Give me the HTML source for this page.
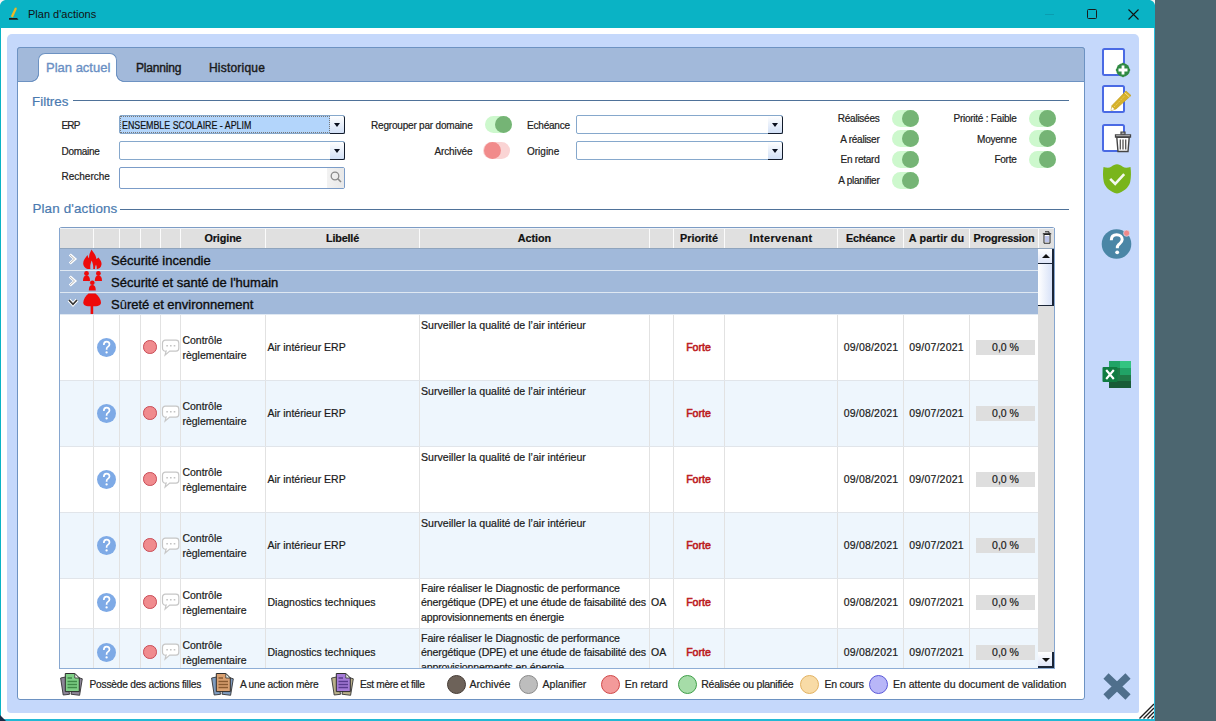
<!DOCTYPE html><html><head><meta charset="utf-8"><style>
*{margin:0;padding:0;box-sizing:border-box}
html,body{width:1216px;height:721px;overflow:hidden;background:#4c6670;font-family:"Liberation Sans",sans-serif;color:#1a1a1a}
.a{position:absolute}
.t{position:absolute;white-space:nowrap;line-height:1;-webkit-text-stroke:0.2px currentColor}
svg{position:absolute;overflow:visible}
</style></head><body>
<div class="a" style="left:0px;top:0px;width:1155px;height:721px;background:#0ab3c5"></div>
<svg style="left:0;top:0" width="6" height="6" viewBox="0 0 6 6"><path d="M0 0 H5 Q1 1 0 5 Z" fill="#f4f4f4"/></svg>
<svg style="left:1149px;top:0" width="6" height="6" viewBox="0 0 6 6"><path d="M6 0 H1 Q5 1 6 5 Z" fill="#f4f4f4"/></svg>
<div class="a" style="left:1px;top:28px;width:1153px;height:691px;background:#fff"></div>
<div class="a" style="left:7px;top:34px;width:1132px;height:679px;background:#c5d8fb;border-radius:5px 5px 2px 4px"></div>
<svg style="left:8px;top:6px" width="14" height="16" viewBox="0 0 14 16"><path d="M2.8 10.6 L7 1.6 L9 2.6 L4.9 11.4 Z" fill="#f0b825"/><path d="M7 1.6 L9 2.6 L8.6 1.2 Z" fill="#7ac23a"/><path d="M1 12 h8 l1.5 1.8 h-9.5z" fill="#1d1d1d"/></svg>
<div class="t" style="left:28.00px;top:8.89px;font-size:11px;color:#111;-webkit-text-stroke:0">Plan d'actions</div>
<div class="a" style="left:1045px;top:14px;width:9px;height:1px;background:#0a9db0"></div>
<div class="a" style="left:1087px;top:9px;width:10px;height:10px;border:1.2px solid #1a1a1a;border-radius:1.5px"></div>
<svg style="left:1128px;top:9px" width="11" height="11" viewBox="0 0 11 11"><path d="M0.5 0.5 L10.5 10.5 M10.5 0.5 L0.5 10.5" stroke="#111" stroke-width="1.1"/></svg>
<div class="a" style="left:17px;top:47px;width:1068px;height:653px;background:#fff;border:1px solid #6d92c2;border-radius:3px"></div>
<div class="a" style="left:17px;top:47px;width:1068px;height:35px;background:#a2b9da;border:1px solid #6d92c2;border-radius:3px 3px 0 0"></div>
<div class="a" style="left:38px;top:53px;width:79px;height:30px;background:#fff;border:1px solid #6d92c2;border-bottom:none;border-radius:7px 7px 0 0"></div>
<div class="a" style="left:31px;top:74px;width:8px;height:8px;background:radial-gradient(circle at 0 0,#a2b9da 0,#a2b9da 6.5px,#6d92c2 7px,#6d92c2 7.6px,#fff 8.2px)"></div>
<div class="a" style="left:116px;top:74px;width:8px;height:8px;background:radial-gradient(circle at 100% 0,#a2b9da 0,#a2b9da 6.5px,#6d92c2 7px,#6d92c2 7.6px,#fff 8.2px)"></div>
<div class="a" style="left:38px;top:81px;width:79px;height:2px;background:#fff"></div>
<div class="t" style="left:46.00px;top:60.50px;font-size:13px;color:#6a8fc4;-webkit-text-stroke:0.35px #6a8fc4">Plan actuel</div>
<div class="t" style="left:136.00px;top:61.74px;font-size:12px;color:#1a1a1a;-webkit-text-stroke:0.4px #1a1a1a;letter-spacing:-0.2px">Planning</div>
<div class="t" style="left:209.00px;top:61.74px;font-size:12px;color:#1a1a1a;-webkit-text-stroke:0.4px #1a1a1a;letter-spacing:0.2px">Historique</div>
<div class="t" style="left:32.00px;top:95.06px;font-size:13.4px;color:#4a7ab0;-webkit-text-stroke:0.2px #4a7ab0">Filtres</div>
<div class="a" style="left:73px;top:100px;width:996px;height:1px;background:#4f7299"></div>
<div class="t" style="left:61.50px;top:120.84px;font-size:10px;color:#222;letter-spacing:-0.8px">ERP</div>
<div class="t" style="left:61.50px;top:146.84px;font-size:10px;color:#222;letter-spacing:-0.3px">Domaine</div>
<div class="t" style="left:61.50px;top:172.13px;font-size:10px;color:#222;">Recherche</div>
<div class="a" style="left:119px;top:115px;width:226px;height:19px;background:#fff;border:1px solid #86a8cc;border-radius:2px"></div>
<div class="a" style="left:120px;top:116px;width:210px;height:17px;background:#b3d5fb;border:1px dotted #777"></div>
<div class="a" style="left:330px;top:116px;width:15px;height:18px;background:linear-gradient(#ffffff,#d2e0f6);border-right:1.5px solid #111a2a;border-bottom:1.5px solid #111a2a;border-radius:0 2px 2px 0"></div>
<div class="a" style="left:334px;top:123px;width:0;height:0;border-left:3.5px solid transparent;border-right:3.5px solid transparent;border-top:4.5px solid #0a0f1e"></div>
<div class="t" style="left:121.50px;top:120.73px;font-size:10px;color:#111;transform:scaleX(0.885);transform-origin:0 0">ENSEMBLE SCOLAIRE - APLIM</div>
<div class="a" style="left:119px;top:141px;width:226px;height:19px;background:#fff;border:1px solid #86a8cc;border-radius:2px"></div>
<div class="a" style="left:330px;top:142px;width:15px;height:18px;background:linear-gradient(#ffffff,#d2e0f6);border-right:1.5px solid #111a2a;border-bottom:1.5px solid #111a2a;border-radius:0 2px 2px 0"></div>
<div class="a" style="left:334px;top:149px;width:0;height:0;border-left:3.5px solid transparent;border-right:3.5px solid transparent;border-top:4.5px solid #0a0f1e"></div>
<div class="a" style="left:119px;top:167px;width:226px;height:22px;background:#fff;border:1px solid #7b9cc8;border-radius:2px"></div>
<div class="a" style="left:327px;top:168px;width:17px;height:20px;background:linear-gradient(90deg,#f2f2f2,#e8e8e8)"></div>
<svg style="left:330px;top:171px" width="12" height="12" viewBox="0 0 12 12"><circle cx="5" cy="5" r="3.8" fill="none" stroke="#8a8a8a" stroke-width="1.3"/><path d="M7.8 7.8 L11 11" stroke="#8a8a8a" stroke-width="1.6"/></svg>
<div class="t" style="left:172.50px;width:300px;text-align:right;top:120.94px;font-size:10px;color:#222;letter-spacing:-0.2px">Regrouper par domaine</div>
<div class="a" style="left:485px;top:116px;width:27px;height:17px;border-radius:9px;background:#cdf8cd"></div>
<div class="a" style="left:495px;top:116px;width:17px;height:17px;border-radius:50%;background:#75b475"></div>
<div class="t" style="left:172.50px;width:300px;text-align:right;top:146.73px;font-size:10px;color:#222;letter-spacing:-0.1px">Archivée</div>
<div class="a" style="left:483px;top:142px;width:27px;height:17px;border-radius:9px;background:#fad4d4"></div>
<div class="a" style="left:484px;top:142px;width:17px;height:17px;border-radius:50%;background:#f18b8b"></div>
<div class="t" style="left:527.00px;top:120.94px;font-size:10px;color:#222;letter-spacing:-0.2px">Echéance</div>
<div class="t" style="left:527.00px;top:146.73px;font-size:10px;color:#222;">Origine</div>
<div class="a" style="left:576px;top:115px;width:207px;height:19px;background:#fff;border:1px solid #86a8cc;border-radius:2px"></div>
<div class="a" style="left:768px;top:116px;width:15px;height:18px;background:linear-gradient(#ffffff,#d2e0f6);border-right:1.5px solid #111a2a;border-bottom:1.5px solid #111a2a;border-radius:0 2px 2px 0"></div>
<div class="a" style="left:772px;top:123px;width:0;height:0;border-left:3.5px solid transparent;border-right:3.5px solid transparent;border-top:4.5px solid #0a0f1e"></div>
<div class="a" style="left:576px;top:141px;width:207px;height:19px;background:#fff;border:1px solid #86a8cc;border-radius:2px"></div>
<div class="a" style="left:768px;top:142px;width:15px;height:18px;background:linear-gradient(#ffffff,#d2e0f6);border-right:1.5px solid #111a2a;border-bottom:1.5px solid #111a2a;border-radius:0 2px 2px 0"></div>
<div class="a" style="left:772px;top:149px;width:0;height:0;border-left:3.5px solid transparent;border-right:3.5px solid transparent;border-top:4.5px solid #0a0f1e"></div>
<div class="t" style="left:579.50px;width:300px;text-align:right;top:114.03px;font-size:10px;color:#222;letter-spacing:-0.25px">Réalisées</div>
<div class="a" style="left:892px;top:110px;width:27px;height:17px;border-radius:9px;background:#cdf8cd"></div>
<div class="a" style="left:902px;top:110px;width:17px;height:17px;border-radius:50%;background:#75b475"></div>
<div class="t" style="left:579.50px;width:300px;text-align:right;top:134.53px;font-size:10px;color:#222;letter-spacing:-0.25px">A réaliser</div>
<div class="a" style="left:892px;top:130px;width:27px;height:17px;border-radius:9px;background:#cdf8cd"></div>
<div class="a" style="left:902px;top:130px;width:17px;height:17px;border-radius:50%;background:#75b475"></div>
<div class="t" style="left:579.50px;width:300px;text-align:right;top:155.44px;font-size:10px;color:#222;letter-spacing:-0.25px">En retard</div>
<div class="a" style="left:892px;top:151px;width:27px;height:17px;border-radius:9px;background:#cdf8cd"></div>
<div class="a" style="left:902px;top:151px;width:17px;height:17px;border-radius:50%;background:#75b475"></div>
<div class="t" style="left:579.50px;width:300px;text-align:right;top:176.44px;font-size:10px;color:#222;letter-spacing:-0.25px">A planifier</div>
<div class="a" style="left:892px;top:172px;width:27px;height:17px;border-radius:9px;background:#cdf8cd"></div>
<div class="a" style="left:902px;top:172px;width:17px;height:17px;border-radius:50%;background:#75b475"></div>
<div class="t" style="left:716.50px;width:300px;text-align:right;top:114.03px;font-size:10px;color:#222;letter-spacing:-0.25px">Priorité : Faible</div>
<div class="a" style="left:1029px;top:110px;width:27px;height:17px;border-radius:9px;background:#cdf8cd"></div>
<div class="a" style="left:1039px;top:110px;width:17px;height:17px;border-radius:50%;background:#75b475"></div>
<div class="t" style="left:716.50px;width:300px;text-align:right;top:134.53px;font-size:10px;color:#222;letter-spacing:-0.25px">Moyenne</div>
<div class="a" style="left:1029px;top:130px;width:27px;height:17px;border-radius:9px;background:#cdf8cd"></div>
<div class="a" style="left:1039px;top:130px;width:17px;height:17px;border-radius:50%;background:#75b475"></div>
<div class="t" style="left:716.50px;width:300px;text-align:right;top:155.44px;font-size:10px;color:#222;letter-spacing:-0.25px">Forte</div>
<div class="a" style="left:1029px;top:151px;width:27px;height:17px;border-radius:9px;background:#cdf8cd"></div>
<div class="a" style="left:1039px;top:151px;width:17px;height:17px;border-radius:50%;background:#75b475"></div>
<div class="t" style="left:32.40px;top:202.46px;font-size:13.4px;color:#4a7ab0;letter-spacing:0.15px;-webkit-text-stroke:0.2px #4a7ab0">Plan d'actions</div>
<div class="a" style="left:120px;top:209px;width:949px;height:1px;background:#4f7299"></div>
<div class="a" style="left:59px;top:227px;width:996px;height:442px;background:#fff;border:1px solid #86a6cf;border-top:2px solid #7d9cc4;border-radius:3px 3px 0 0;overflow:hidden"></div>
<div class="a" style="left:60px;top:229px;width:978px;height:19px;background:#e0e0e0"></div>
<div class="a" style="left:60px;top:228px;width:994px;height:1px;background:#f0f3f7"></div>
<div class="a" style="left:1038px;top:229px;width:16px;height:20px;background:#e0e0e0"></div>
<div class="a" style="left:60px;top:248px;width:994px;height:1px;background:#8fa4bd"></div>
<div class="a" style="left:93px;top:229px;width:1px;height:19px;background:#fbfbfb"></div>
<div class="a" style="left:119px;top:229px;width:1px;height:19px;background:#fbfbfb"></div>
<div class="a" style="left:140px;top:229px;width:1px;height:19px;background:#fbfbfb"></div>
<div class="a" style="left:160px;top:229px;width:1px;height:19px;background:#fbfbfb"></div>
<div class="a" style="left:180px;top:229px;width:1px;height:19px;background:#fbfbfb"></div>
<div class="a" style="left:265px;top:229px;width:1px;height:19px;background:#fbfbfb"></div>
<div class="a" style="left:419px;top:229px;width:1px;height:19px;background:#fbfbfb"></div>
<div class="a" style="left:649px;top:229px;width:1px;height:19px;background:#fbfbfb"></div>
<div class="a" style="left:673px;top:229px;width:1px;height:19px;background:#fbfbfb"></div>
<div class="a" style="left:724px;top:229px;width:1px;height:19px;background:#fbfbfb"></div>
<div class="a" style="left:837px;top:229px;width:1px;height:19px;background:#fbfbfb"></div>
<div class="a" style="left:903px;top:229px;width:1px;height:19px;background:#fbfbfb"></div>
<div class="a" style="left:969px;top:229px;width:1px;height:19px;background:#fbfbfb"></div>
<div class="a" style="left:1038px;top:229px;width:1px;height:19px;background:#fbfbfb"></div>
<div class="t" style="left:73.00px;width:300px;text-align:center;top:233.16px;font-size:10.8px;font-weight:bold;color:#111;letter-spacing:-0.11px">Origine</div>
<div class="t" style="left:192.50px;width:300px;text-align:center;top:233.16px;font-size:10.8px;font-weight:bold;color:#111;letter-spacing:-0.17px">Libellé</div>
<div class="t" style="left:384.50px;width:300px;text-align:center;top:233.16px;font-size:10.8px;font-weight:bold;color:#111;letter-spacing:-0.05px">Action</div>
<div class="t" style="left:549.00px;width:300px;text-align:center;top:233.16px;font-size:10.8px;font-weight:bold;color:#111;letter-spacing:0px">Priorité</div>
<div class="t" style="left:631.00px;width:300px;text-align:center;top:233.16px;font-size:10.8px;font-weight:bold;color:#111;letter-spacing:0.44px">Intervenant</div>
<div class="t" style="left:720.50px;width:300px;text-align:center;top:233.16px;font-size:10.8px;font-weight:bold;color:#111;letter-spacing:-0.18px">Echéance</div>
<div class="t" style="left:786.50px;width:300px;text-align:center;top:233.16px;font-size:10.8px;font-weight:bold;color:#111;letter-spacing:0.1px">A partir du</div>
<div class="t" style="left:854.00px;width:300px;text-align:center;top:233.16px;font-size:10.8px;font-weight:bold;color:#111;letter-spacing:-0.2px">Progression</div>
<svg style="left:1042px;top:231px" width="10" height="13" viewBox="0 0 10 13"><path d="M3 0.8 h4 v1.7" fill="none" stroke="#222" stroke-width="1"/><path d="M0.8 2.8 h8.4" stroke="#222" stroke-width="1.2"/><path d="M2 3.5 h6 v8.7 h-6z" fill="#fff" stroke="#222" stroke-width="1"/><path d="M4 5v6M6 5v6" stroke="#7a8ad8" stroke-width="1"/></svg>
<div class="a" style="left:60px;top:249px;width:978px;height:21px;background:#a1b9da"></div>
<div class="a" style="left:60px;top:270px;width:978px;height:1px;background:#dfe8f2"></div>
<div class="t" style="left:111.00px;top:253.50px;font-size:13px;color:#0d0d0d;-webkit-text-stroke:0.35px #0d0d0d">Sécurité incendie</div>
<svg style="left:68px;top:253px" width="10" height="12" viewBox="0 0 10 12"><path d="M1.8 1.5 L6.8 6 L1.8 10.5" fill="none" stroke="#fff" stroke-width="3"/><path d="M2 2 L6.5 6 L2 10" fill="none" stroke="#b0b0b0" stroke-width="0.9"/></svg>
<div class="a" style="left:60px;top:271px;width:978px;height:21px;background:#a1b9da"></div>
<div class="a" style="left:60px;top:292px;width:978px;height:1px;background:#dfe8f2"></div>
<div class="t" style="left:111.00px;top:275.50px;font-size:13px;color:#0d0d0d;-webkit-text-stroke:0.35px #0d0d0d">Sécurité et santé de l'humain</div>
<svg style="left:68px;top:275px" width="10" height="12" viewBox="0 0 10 12"><path d="M1.8 1.5 L6.8 6 L1.8 10.5" fill="none" stroke="#fff" stroke-width="3"/><path d="M2 2 L6.5 6 L2 10" fill="none" stroke="#b0b0b0" stroke-width="0.9"/></svg>
<div class="a" style="left:60px;top:293px;width:978px;height:21px;background:#a1b9da"></div>
<div class="a" style="left:60px;top:314px;width:978px;height:1px;background:#dfe8f2"></div>
<div class="t" style="left:111.00px;top:297.50px;font-size:13px;color:#0d0d0d;-webkit-text-stroke:0.35px #0d0d0d">S<span style="-webkit-text-stroke:0.1px #0d0d0d">û</span>reté et environnement</div>
<svg style="left:67px;top:298px" width="12" height="10" viewBox="0 0 12 10"><path d="M2 2 L6 6.3 L10 2" fill="none" stroke="#fff" stroke-width="3.6"/><path d="M2 2 L6 6.3 L10 2" fill="none" stroke="#333" stroke-width="1.7"/></svg>
<svg style="left:83px;top:249px" width="19" height="21" viewBox="0 0 19 21"><path fill="#ee0a0a" fill-rule="evenodd" d="M8.5 0.5 C10 3 12.8 5.5 13.4 10 C14.3 9.6 15 9.2 15.5 8.5 C17.5 11 18.8 13 18.5 15.5 C18.2 18.5 16 20 13 20 L6 20 C3 20 0.4 18 0.2 14.5 C0 11.5 2.5 9 4.5 6 C4.8 7.5 5.4 8.6 6 9.2 C6 5 7.5 3 8.5 0.5 Z M8.7 11.5 C9.6 14 10.6 16.5 10.2 20 L7.4 20 C7 17 7.6 14 8.7 11.5 Z M13 15.5 C13.6 17 14 18.5 13.7 20 L12 20 C11.9 18.5 12.3 17 13 15.5Z"/></svg>
<svg style="left:82px;top:270px" width="22" height="22" viewBox="0 0 22 22"><path d="M4.5 8 L10.3 17 L16.5 8" stroke="#9aa6b6" stroke-width="0.6" fill="none"/><g fill="#ee0a0a"><circle cx="4.5" cy="3.5" r="2.4"/><path d="M1 11 C1 7.3 2.3 5.6 4.5 5.6 C6.7 5.6 8 7.3 8 11Z"/><circle cx="16.4" cy="3.5" r="2.4"/><path d="M12.8 11 C12.8 7.3 14.1 5.6 16.4 5.6 C18.7 5.6 20 7.3 20 11Z"/><circle cx="10.3" cy="12.8" r="2.3"/><path d="M6.8 20.5 C6.8 16.8 8.1 15 10.3 15 C12.5 15 13.8 16.8 13.8 20.5Z"/></g></svg>
<svg style="left:83px;top:293px" width="19" height="22" viewBox="0 0 19 22"><path d="M5.5 0.5 L12.5 0.5 C15.5 3 18 6.5 18 9.5 C18 12.5 15.5 13.3 9 13.3 C2.5 13.3 0.3 12.5 0.3 9.5 C0.3 6.5 2.5 3 5.5 0.5Z" fill="#ee0a0a"/><path d="M7.6 12.5 h2.6 v8.5 h-2.6z" fill="#ee0a0a"/></svg>
<div class="a" style="left:0;top:0;width:1216px;height:668px;overflow:hidden">
<div class="a" style="left:60px;top:315px;width:978px;height:65px;background:#ffffff"></div>
<div class="a" style="left:60px;top:380px;width:978px;height:1px;background:#e1e5ea"></div>
<div class="a" style="left:93px;top:315px;width:1px;height:65px;background:#e2e2e2"></div>
<div class="a" style="left:119px;top:315px;width:1px;height:65px;background:#e2e2e2"></div>
<div class="a" style="left:140px;top:315px;width:1px;height:65px;background:#e2e2e2"></div>
<div class="a" style="left:160px;top:315px;width:1px;height:65px;background:#e2e2e2"></div>
<div class="a" style="left:180px;top:315px;width:1px;height:65px;background:#e2e2e2"></div>
<div class="a" style="left:265px;top:315px;width:1px;height:65px;background:#e2e2e2"></div>
<div class="a" style="left:419px;top:315px;width:1px;height:65px;background:#e2e2e2"></div>
<div class="a" style="left:649px;top:315px;width:1px;height:65px;background:#e2e2e2"></div>
<div class="a" style="left:673px;top:315px;width:1px;height:65px;background:#e2e2e2"></div>
<div class="a" style="left:724px;top:315px;width:1px;height:65px;background:#e2e2e2"></div>
<div class="a" style="left:837px;top:315px;width:1px;height:65px;background:#e2e2e2"></div>
<div class="a" style="left:903px;top:315px;width:1px;height:65px;background:#e2e2e2"></div>
<div class="a" style="left:969px;top:315px;width:1px;height:65px;background:#e2e2e2"></div>
<svg style="left:97px;top:338.0px" width="19" height="19" viewBox="0 0 19 19"><circle cx="9.5" cy="9.5" r="9.5" fill="#7eaae6"/><path d="M6.8 7 C6.8 5 8 3.6 9.6 3.6 C11.3 3.6 12.5 4.9 12.5 6.5 C12.5 8.1 10.9 8.7 10.1 9.5 C9.6 10 9.6 10.7 9.6 11.8" fill="none" stroke="#fff" stroke-width="1.7"/><circle cx="9.6" cy="14.4" r="1.15" fill="#fff"/></svg>
<div class="a" style="left:143px;top:340.3px;width:13.5px;height:13.5px;border-radius:50%;background:#f08b8e;border:1.2px solid #c94a55"></div>
<svg style="left:161px;top:338.5px" width="19" height="18" viewBox="0 0 19 18"><path d="M4.3 1.2 h10.7 a2.8 2.8 0 0 1 2.8 2.8 v5.3 a2.8 2.8 0 0 1 -2.8 2.8 h-6.3 l-4.6 4 l1 -4 a2.8 2.8 0 0 1 -3.6 -2.8 v-5.3 a2.8 2.8 0 0 1 2.8 -2.8z" fill="#fff" stroke="#c6c6c6" stroke-width="1.2"/><g fill="#c4c4c4"><rect x="5.3" y="6" width="1.6" height="1.5"/><rect x="9" y="6" width="1.6" height="1.5"/><rect x="12.7" y="6" width="1.6" height="1.5"/></g></svg>
<div class="t" style="left:182.40px;top:335.31px;font-size:10.5px;color:#1a1a1a">Contrôle</div>
<div class="t" style="left:182.40px;top:349.91px;font-size:10.5px;color:#1a1a1a">règlementaire</div>
<div class="t" style="left:267.50px;top:341.61px;font-size:10.5px;color:#1a1a1a">Air intérieur ERP</div>
<div class="t" style="left:421.00px;top:320.03px;font-size:10.6px;color:#1a1a1a">Surveiller la qualité de l’air intérieur</div>
<div class="t" style="left:548.50px;width:300px;text-align:center;top:341.53px;font-size:10.6px;color:#bc1a1e;-webkit-text-stroke:0.55px #bc1a1e;letter-spacing:0px">Forte</div>
<div class="t" style="left:721.00px;width:300px;text-align:center;top:341.61px;font-size:10.5px;color:#1a1a1a;letter-spacing:0.2px">09/08/2021</div>
<div class="t" style="left:786.50px;width:300px;text-align:center;top:341.61px;font-size:10.5px;color:#1a1a1a;letter-spacing:0.2px">09/07/2021</div>
<div class="a" style="left:976px;top:340px;width:59px;height:15px;background:#dedede"></div>
<div class="t" style="left:855.50px;width:300px;text-align:center;top:341.61px;font-size:10.5px;color:#1a1a1a">0,0 %</div>
<div class="a" style="left:60px;top:381px;width:978px;height:65px;background:#eef6fd"></div>
<div class="a" style="left:60px;top:446px;width:978px;height:1px;background:#e1e5ea"></div>
<div class="a" style="left:93px;top:381px;width:1px;height:65px;background:#e2e2e2"></div>
<div class="a" style="left:119px;top:381px;width:1px;height:65px;background:#e2e2e2"></div>
<div class="a" style="left:140px;top:381px;width:1px;height:65px;background:#e2e2e2"></div>
<div class="a" style="left:160px;top:381px;width:1px;height:65px;background:#e2e2e2"></div>
<div class="a" style="left:180px;top:381px;width:1px;height:65px;background:#e2e2e2"></div>
<div class="a" style="left:265px;top:381px;width:1px;height:65px;background:#e2e2e2"></div>
<div class="a" style="left:419px;top:381px;width:1px;height:65px;background:#e2e2e2"></div>
<div class="a" style="left:649px;top:381px;width:1px;height:65px;background:#e2e2e2"></div>
<div class="a" style="left:673px;top:381px;width:1px;height:65px;background:#e2e2e2"></div>
<div class="a" style="left:724px;top:381px;width:1px;height:65px;background:#e2e2e2"></div>
<div class="a" style="left:837px;top:381px;width:1px;height:65px;background:#e2e2e2"></div>
<div class="a" style="left:903px;top:381px;width:1px;height:65px;background:#e2e2e2"></div>
<div class="a" style="left:969px;top:381px;width:1px;height:65px;background:#e2e2e2"></div>
<svg style="left:97px;top:404.0px" width="19" height="19" viewBox="0 0 19 19"><circle cx="9.5" cy="9.5" r="9.5" fill="#7eaae6"/><path d="M6.8 7 C6.8 5 8 3.6 9.6 3.6 C11.3 3.6 12.5 4.9 12.5 6.5 C12.5 8.1 10.9 8.7 10.1 9.5 C9.6 10 9.6 10.7 9.6 11.8" fill="none" stroke="#fff" stroke-width="1.7"/><circle cx="9.6" cy="14.4" r="1.15" fill="#fff"/></svg>
<div class="a" style="left:143px;top:406.3px;width:13.5px;height:13.5px;border-radius:50%;background:#f08b8e;border:1.2px solid #c94a55"></div>
<svg style="left:161px;top:404.5px" width="19" height="18" viewBox="0 0 19 18"><path d="M4.3 1.2 h10.7 a2.8 2.8 0 0 1 2.8 2.8 v5.3 a2.8 2.8 0 0 1 -2.8 2.8 h-6.3 l-4.6 4 l1 -4 a2.8 2.8 0 0 1 -3.6 -2.8 v-5.3 a2.8 2.8 0 0 1 2.8 -2.8z" fill="#fff" stroke="#c6c6c6" stroke-width="1.2"/><g fill="#c4c4c4"><rect x="5.3" y="6" width="1.6" height="1.5"/><rect x="9" y="6" width="1.6" height="1.5"/><rect x="12.7" y="6" width="1.6" height="1.5"/></g></svg>
<div class="t" style="left:182.40px;top:401.31px;font-size:10.5px;color:#1a1a1a">Contrôle</div>
<div class="t" style="left:182.40px;top:415.91px;font-size:10.5px;color:#1a1a1a">règlementaire</div>
<div class="t" style="left:267.50px;top:407.61px;font-size:10.5px;color:#1a1a1a">Air intérieur ERP</div>
<div class="t" style="left:421.00px;top:386.03px;font-size:10.6px;color:#1a1a1a">Surveiller la qualité de l’air intérieur</div>
<div class="t" style="left:548.50px;width:300px;text-align:center;top:407.53px;font-size:10.6px;color:#bc1a1e;-webkit-text-stroke:0.55px #bc1a1e;letter-spacing:0px">Forte</div>
<div class="t" style="left:721.00px;width:300px;text-align:center;top:407.61px;font-size:10.5px;color:#1a1a1a;letter-spacing:0.2px">09/08/2021</div>
<div class="t" style="left:786.50px;width:300px;text-align:center;top:407.61px;font-size:10.5px;color:#1a1a1a;letter-spacing:0.2px">09/07/2021</div>
<div class="a" style="left:976px;top:406px;width:59px;height:15px;background:#dedede"></div>
<div class="t" style="left:855.50px;width:300px;text-align:center;top:407.61px;font-size:10.5px;color:#1a1a1a">0,0 %</div>
<div class="a" style="left:60px;top:447px;width:978px;height:65px;background:#ffffff"></div>
<div class="a" style="left:60px;top:512px;width:978px;height:1px;background:#e1e5ea"></div>
<div class="a" style="left:93px;top:447px;width:1px;height:65px;background:#e2e2e2"></div>
<div class="a" style="left:119px;top:447px;width:1px;height:65px;background:#e2e2e2"></div>
<div class="a" style="left:140px;top:447px;width:1px;height:65px;background:#e2e2e2"></div>
<div class="a" style="left:160px;top:447px;width:1px;height:65px;background:#e2e2e2"></div>
<div class="a" style="left:180px;top:447px;width:1px;height:65px;background:#e2e2e2"></div>
<div class="a" style="left:265px;top:447px;width:1px;height:65px;background:#e2e2e2"></div>
<div class="a" style="left:419px;top:447px;width:1px;height:65px;background:#e2e2e2"></div>
<div class="a" style="left:649px;top:447px;width:1px;height:65px;background:#e2e2e2"></div>
<div class="a" style="left:673px;top:447px;width:1px;height:65px;background:#e2e2e2"></div>
<div class="a" style="left:724px;top:447px;width:1px;height:65px;background:#e2e2e2"></div>
<div class="a" style="left:837px;top:447px;width:1px;height:65px;background:#e2e2e2"></div>
<div class="a" style="left:903px;top:447px;width:1px;height:65px;background:#e2e2e2"></div>
<div class="a" style="left:969px;top:447px;width:1px;height:65px;background:#e2e2e2"></div>
<svg style="left:97px;top:470.0px" width="19" height="19" viewBox="0 0 19 19"><circle cx="9.5" cy="9.5" r="9.5" fill="#7eaae6"/><path d="M6.8 7 C6.8 5 8 3.6 9.6 3.6 C11.3 3.6 12.5 4.9 12.5 6.5 C12.5 8.1 10.9 8.7 10.1 9.5 C9.6 10 9.6 10.7 9.6 11.8" fill="none" stroke="#fff" stroke-width="1.7"/><circle cx="9.6" cy="14.4" r="1.15" fill="#fff"/></svg>
<div class="a" style="left:143px;top:472.3px;width:13.5px;height:13.5px;border-radius:50%;background:#f08b8e;border:1.2px solid #c94a55"></div>
<svg style="left:161px;top:470.5px" width="19" height="18" viewBox="0 0 19 18"><path d="M4.3 1.2 h10.7 a2.8 2.8 0 0 1 2.8 2.8 v5.3 a2.8 2.8 0 0 1 -2.8 2.8 h-6.3 l-4.6 4 l1 -4 a2.8 2.8 0 0 1 -3.6 -2.8 v-5.3 a2.8 2.8 0 0 1 2.8 -2.8z" fill="#fff" stroke="#c6c6c6" stroke-width="1.2"/><g fill="#c4c4c4"><rect x="5.3" y="6" width="1.6" height="1.5"/><rect x="9" y="6" width="1.6" height="1.5"/><rect x="12.7" y="6" width="1.6" height="1.5"/></g></svg>
<div class="t" style="left:182.40px;top:467.31px;font-size:10.5px;color:#1a1a1a">Contrôle</div>
<div class="t" style="left:182.40px;top:481.91px;font-size:10.5px;color:#1a1a1a">règlementaire</div>
<div class="t" style="left:267.50px;top:473.61px;font-size:10.5px;color:#1a1a1a">Air intérieur ERP</div>
<div class="t" style="left:421.00px;top:452.03px;font-size:10.6px;color:#1a1a1a">Surveiller la qualité de l’air intérieur</div>
<div class="t" style="left:548.50px;width:300px;text-align:center;top:473.53px;font-size:10.6px;color:#bc1a1e;-webkit-text-stroke:0.55px #bc1a1e;letter-spacing:0px">Forte</div>
<div class="t" style="left:721.00px;width:300px;text-align:center;top:473.61px;font-size:10.5px;color:#1a1a1a;letter-spacing:0.2px">09/08/2021</div>
<div class="t" style="left:786.50px;width:300px;text-align:center;top:473.61px;font-size:10.5px;color:#1a1a1a;letter-spacing:0.2px">09/07/2021</div>
<div class="a" style="left:976px;top:472px;width:59px;height:15px;background:#dedede"></div>
<div class="t" style="left:855.50px;width:300px;text-align:center;top:473.61px;font-size:10.5px;color:#1a1a1a">0,0 %</div>
<div class="a" style="left:60px;top:513px;width:978px;height:65px;background:#eef6fd"></div>
<div class="a" style="left:60px;top:578px;width:978px;height:1px;background:#e1e5ea"></div>
<div class="a" style="left:93px;top:513px;width:1px;height:65px;background:#e2e2e2"></div>
<div class="a" style="left:119px;top:513px;width:1px;height:65px;background:#e2e2e2"></div>
<div class="a" style="left:140px;top:513px;width:1px;height:65px;background:#e2e2e2"></div>
<div class="a" style="left:160px;top:513px;width:1px;height:65px;background:#e2e2e2"></div>
<div class="a" style="left:180px;top:513px;width:1px;height:65px;background:#e2e2e2"></div>
<div class="a" style="left:265px;top:513px;width:1px;height:65px;background:#e2e2e2"></div>
<div class="a" style="left:419px;top:513px;width:1px;height:65px;background:#e2e2e2"></div>
<div class="a" style="left:649px;top:513px;width:1px;height:65px;background:#e2e2e2"></div>
<div class="a" style="left:673px;top:513px;width:1px;height:65px;background:#e2e2e2"></div>
<div class="a" style="left:724px;top:513px;width:1px;height:65px;background:#e2e2e2"></div>
<div class="a" style="left:837px;top:513px;width:1px;height:65px;background:#e2e2e2"></div>
<div class="a" style="left:903px;top:513px;width:1px;height:65px;background:#e2e2e2"></div>
<div class="a" style="left:969px;top:513px;width:1px;height:65px;background:#e2e2e2"></div>
<svg style="left:97px;top:536.0px" width="19" height="19" viewBox="0 0 19 19"><circle cx="9.5" cy="9.5" r="9.5" fill="#7eaae6"/><path d="M6.8 7 C6.8 5 8 3.6 9.6 3.6 C11.3 3.6 12.5 4.9 12.5 6.5 C12.5 8.1 10.9 8.7 10.1 9.5 C9.6 10 9.6 10.7 9.6 11.8" fill="none" stroke="#fff" stroke-width="1.7"/><circle cx="9.6" cy="14.4" r="1.15" fill="#fff"/></svg>
<div class="a" style="left:143px;top:538.3px;width:13.5px;height:13.5px;border-radius:50%;background:#f08b8e;border:1.2px solid #c94a55"></div>
<svg style="left:161px;top:536.5px" width="19" height="18" viewBox="0 0 19 18"><path d="M4.3 1.2 h10.7 a2.8 2.8 0 0 1 2.8 2.8 v5.3 a2.8 2.8 0 0 1 -2.8 2.8 h-6.3 l-4.6 4 l1 -4 a2.8 2.8 0 0 1 -3.6 -2.8 v-5.3 a2.8 2.8 0 0 1 2.8 -2.8z" fill="#fff" stroke="#c6c6c6" stroke-width="1.2"/><g fill="#c4c4c4"><rect x="5.3" y="6" width="1.6" height="1.5"/><rect x="9" y="6" width="1.6" height="1.5"/><rect x="12.7" y="6" width="1.6" height="1.5"/></g></svg>
<div class="t" style="left:182.40px;top:533.31px;font-size:10.5px;color:#1a1a1a">Contrôle</div>
<div class="t" style="left:182.40px;top:547.91px;font-size:10.5px;color:#1a1a1a">règlementaire</div>
<div class="t" style="left:267.50px;top:539.61px;font-size:10.5px;color:#1a1a1a">Air intérieur ERP</div>
<div class="t" style="left:421.00px;top:518.03px;font-size:10.6px;color:#1a1a1a">Surveiller la qualité de l’air intérieur</div>
<div class="t" style="left:548.50px;width:300px;text-align:center;top:539.53px;font-size:10.6px;color:#bc1a1e;-webkit-text-stroke:0.55px #bc1a1e;letter-spacing:0px">Forte</div>
<div class="t" style="left:721.00px;width:300px;text-align:center;top:539.61px;font-size:10.5px;color:#1a1a1a;letter-spacing:0.2px">09/08/2021</div>
<div class="t" style="left:786.50px;width:300px;text-align:center;top:539.61px;font-size:10.5px;color:#1a1a1a;letter-spacing:0.2px">09/07/2021</div>
<div class="a" style="left:976px;top:538px;width:59px;height:15px;background:#dedede"></div>
<div class="t" style="left:855.50px;width:300px;text-align:center;top:539.61px;font-size:10.5px;color:#1a1a1a">0,0 %</div>
<div class="a" style="left:60px;top:579px;width:978px;height:49px;background:#ffffff"></div>
<div class="a" style="left:60px;top:628px;width:978px;height:1px;background:#e1e5ea"></div>
<div class="a" style="left:93px;top:579px;width:1px;height:49px;background:#e2e2e2"></div>
<div class="a" style="left:119px;top:579px;width:1px;height:49px;background:#e2e2e2"></div>
<div class="a" style="left:140px;top:579px;width:1px;height:49px;background:#e2e2e2"></div>
<div class="a" style="left:160px;top:579px;width:1px;height:49px;background:#e2e2e2"></div>
<div class="a" style="left:180px;top:579px;width:1px;height:49px;background:#e2e2e2"></div>
<div class="a" style="left:265px;top:579px;width:1px;height:49px;background:#e2e2e2"></div>
<div class="a" style="left:419px;top:579px;width:1px;height:49px;background:#e2e2e2"></div>
<div class="a" style="left:649px;top:579px;width:1px;height:49px;background:#e2e2e2"></div>
<div class="a" style="left:673px;top:579px;width:1px;height:49px;background:#e2e2e2"></div>
<div class="a" style="left:724px;top:579px;width:1px;height:49px;background:#e2e2e2"></div>
<div class="a" style="left:837px;top:579px;width:1px;height:49px;background:#e2e2e2"></div>
<div class="a" style="left:903px;top:579px;width:1px;height:49px;background:#e2e2e2"></div>
<div class="a" style="left:969px;top:579px;width:1px;height:49px;background:#e2e2e2"></div>
<svg style="left:97px;top:592.9px" width="19" height="19" viewBox="0 0 19 19"><circle cx="9.5" cy="9.5" r="9.5" fill="#7eaae6"/><path d="M6.8 7 C6.8 5 8 3.6 9.6 3.6 C11.3 3.6 12.5 4.9 12.5 6.5 C12.5 8.1 10.9 8.7 10.1 9.5 C9.6 10 9.6 10.7 9.6 11.8" fill="none" stroke="#fff" stroke-width="1.7"/><circle cx="9.6" cy="14.4" r="1.15" fill="#fff"/></svg>
<div class="a" style="left:143px;top:595.2px;width:13.5px;height:13.5px;border-radius:50%;background:#f08b8e;border:1.2px solid #c94a55"></div>
<svg style="left:161px;top:593.4px" width="19" height="18" viewBox="0 0 19 18"><path d="M4.3 1.2 h10.7 a2.8 2.8 0 0 1 2.8 2.8 v5.3 a2.8 2.8 0 0 1 -2.8 2.8 h-6.3 l-4.6 4 l1 -4 a2.8 2.8 0 0 1 -3.6 -2.8 v-5.3 a2.8 2.8 0 0 1 2.8 -2.8z" fill="#fff" stroke="#c6c6c6" stroke-width="1.2"/><g fill="#c4c4c4"><rect x="5.3" y="6" width="1.6" height="1.5"/><rect x="9" y="6" width="1.6" height="1.5"/><rect x="12.7" y="6" width="1.6" height="1.5"/></g></svg>
<div class="t" style="left:182.40px;top:590.21px;font-size:10.5px;color:#1a1a1a">Contrôle</div>
<div class="t" style="left:182.40px;top:604.81px;font-size:10.5px;color:#1a1a1a">règlementaire</div>
<div class="t" style="left:267.50px;top:597.31px;font-size:10.5px;color:#1a1a1a">Diagnostics techniques</div>
<div class="t" style="left:421.00px;top:582.53px;font-size:10.6px;color:#1a1a1a;letter-spacing:-0.085px">Faire réaliser le Diagnostic de performance</div>
<div class="t" style="left:421.00px;top:597.23px;font-size:10.6px;color:#1a1a1a;letter-spacing:-0.135px">énergétique (DPE) et une étude de faisabilité des</div>
<div class="t" style="left:421.00px;top:611.93px;font-size:10.6px;color:#1a1a1a;letter-spacing:-0.17px">approvisionnements en énergie</div>
<div class="t" style="left:651.00px;top:597.31px;font-size:10.5px;color:#1a1a1a">OA</div>
<div class="t" style="left:548.50px;width:300px;text-align:center;top:597.23px;font-size:10.6px;color:#bc1a1e;-webkit-text-stroke:0.55px #bc1a1e;letter-spacing:0px">Forte</div>
<div class="t" style="left:721.00px;width:300px;text-align:center;top:597.31px;font-size:10.5px;color:#1a1a1a;letter-spacing:0.2px">09/08/2021</div>
<div class="t" style="left:786.50px;width:300px;text-align:center;top:597.31px;font-size:10.5px;color:#1a1a1a;letter-spacing:0.2px">09/07/2021</div>
<div class="a" style="left:976px;top:595px;width:59px;height:15px;background:#dedede"></div>
<div class="t" style="left:855.50px;width:300px;text-align:center;top:597.31px;font-size:10.5px;color:#1a1a1a">0,0 %</div>
<div class="a" style="left:60px;top:629px;width:978px;height:39px;background:#eef6fd"></div>
<div class="a" style="left:93px;top:629px;width:1px;height:39px;background:#e2e2e2"></div>
<div class="a" style="left:119px;top:629px;width:1px;height:39px;background:#e2e2e2"></div>
<div class="a" style="left:140px;top:629px;width:1px;height:39px;background:#e2e2e2"></div>
<div class="a" style="left:160px;top:629px;width:1px;height:39px;background:#e2e2e2"></div>
<div class="a" style="left:180px;top:629px;width:1px;height:39px;background:#e2e2e2"></div>
<div class="a" style="left:265px;top:629px;width:1px;height:39px;background:#e2e2e2"></div>
<div class="a" style="left:419px;top:629px;width:1px;height:39px;background:#e2e2e2"></div>
<div class="a" style="left:649px;top:629px;width:1px;height:39px;background:#e2e2e2"></div>
<div class="a" style="left:673px;top:629px;width:1px;height:39px;background:#e2e2e2"></div>
<div class="a" style="left:724px;top:629px;width:1px;height:39px;background:#e2e2e2"></div>
<div class="a" style="left:837px;top:629px;width:1px;height:39px;background:#e2e2e2"></div>
<div class="a" style="left:903px;top:629px;width:1px;height:39px;background:#e2e2e2"></div>
<div class="a" style="left:969px;top:629px;width:1px;height:39px;background:#e2e2e2"></div>
<svg style="left:97px;top:642.9px" width="19" height="19" viewBox="0 0 19 19"><circle cx="9.5" cy="9.5" r="9.5" fill="#7eaae6"/><path d="M6.8 7 C6.8 5 8 3.6 9.6 3.6 C11.3 3.6 12.5 4.9 12.5 6.5 C12.5 8.1 10.9 8.7 10.1 9.5 C9.6 10 9.6 10.7 9.6 11.8" fill="none" stroke="#fff" stroke-width="1.7"/><circle cx="9.6" cy="14.4" r="1.15" fill="#fff"/></svg>
<div class="a" style="left:143px;top:645.2px;width:13.5px;height:13.5px;border-radius:50%;background:#f08b8e;border:1.2px solid #c94a55"></div>
<svg style="left:161px;top:643.4px" width="19" height="18" viewBox="0 0 19 18"><path d="M4.3 1.2 h10.7 a2.8 2.8 0 0 1 2.8 2.8 v5.3 a2.8 2.8 0 0 1 -2.8 2.8 h-6.3 l-4.6 4 l1 -4 a2.8 2.8 0 0 1 -3.6 -2.8 v-5.3 a2.8 2.8 0 0 1 2.8 -2.8z" fill="#fff" stroke="#c6c6c6" stroke-width="1.2"/><g fill="#c4c4c4"><rect x="5.3" y="6" width="1.6" height="1.5"/><rect x="9" y="6" width="1.6" height="1.5"/><rect x="12.7" y="6" width="1.6" height="1.5"/></g></svg>
<div class="t" style="left:182.40px;top:640.21px;font-size:10.5px;color:#1a1a1a">Contrôle</div>
<div class="t" style="left:182.40px;top:654.81px;font-size:10.5px;color:#1a1a1a">règlementaire</div>
<div class="t" style="left:267.50px;top:647.31px;font-size:10.5px;color:#1a1a1a">Diagnostics techniques</div>
<div class="t" style="left:421.00px;top:632.53px;font-size:10.6px;color:#1a1a1a;letter-spacing:-0.085px">Faire réaliser le Diagnostic de performance</div>
<div class="t" style="left:421.00px;top:647.23px;font-size:10.6px;color:#1a1a1a;letter-spacing:-0.135px">énergétique (DPE) et une étude de faisabilité des</div>
<div class="t" style="left:421.00px;top:661.93px;font-size:10.6px;color:#1a1a1a;letter-spacing:-0.17px">approvisionnements en énergie</div>
<div class="t" style="left:651.00px;top:647.31px;font-size:10.5px;color:#1a1a1a">OA</div>
<div class="t" style="left:548.50px;width:300px;text-align:center;top:647.23px;font-size:10.6px;color:#bc1a1e;-webkit-text-stroke:0.55px #bc1a1e;letter-spacing:0px">Forte</div>
<div class="t" style="left:721.00px;width:300px;text-align:center;top:647.31px;font-size:10.5px;color:#1a1a1a;letter-spacing:0.2px">09/08/2021</div>
<div class="t" style="left:786.50px;width:300px;text-align:center;top:647.31px;font-size:10.5px;color:#1a1a1a;letter-spacing:0.2px">09/07/2021</div>
<div class="a" style="left:976px;top:645px;width:59px;height:15px;background:#dedede"></div>
<div class="t" style="left:855.50px;width:300px;text-align:center;top:647.31px;font-size:10.5px;color:#1a1a1a">0,0 %</div>
</div>
<div class="a" style="left:1038px;top:249px;width:16px;height:419px;background:#dedede"></div>
<div class="a" style="left:1038px;top:249px;width:16px;height:15px;background:linear-gradient(#fff,#dfe6f8);border-right:2px solid #1b2638;border-bottom:1px solid #1b2638"></div>
<div class="a" style="left:1042px;top:254px;width:0;height:0;border-left:4.5px solid transparent;border-right:4.5px solid transparent;border-bottom:4.5px solid #111"></div>
<div class="a" style="left:1038px;top:264px;width:16px;height:42px;background:linear-gradient(90deg,#fff,#d8e2f8);border-right:2px solid #1b2638;border-bottom:1px solid #1b2638"></div>
<div class="a" style="left:1038px;top:652px;width:16px;height:16px;background:linear-gradient(#fff,#dfe6f8);border-right:2px solid #1b2638;border-bottom:2px solid #1b2638"></div>
<div class="a" style="left:1042px;top:658px;width:0;height:0;border-left:4.5px solid transparent;border-right:4.5px solid transparent;border-top:4.5px solid #111"></div>
<div class="a" style="left:59px;top:668px;width:996px;height:1px;background:#8eaed6"></div>
<div class="a" style="left:59px;top:228px;width:1px;height:441px;background:#86a6cf"></div>
<div class="a" style="left:1054px;top:228px;width:1px;height:441px;background:#86a6cf"></div>
<svg style="left:60px;top:673px" width="23" height="23" viewBox="0 0 23 23"><path d="M0.6 5 L6.5 3.8 L9.5 21.3 L3.2 22Z" fill="#8d8598" stroke="#333" stroke-width="0.9"/><path d="M14 3.2 L22.3 5.8 L19.6 22.3 L11 21.2Z" fill="#8d8598" stroke="#333" stroke-width="0.9"/><path d="M5.3 0.5 h9.5 l4.5 4.5 v13.6 h-14z" fill="#7fcf86" stroke="#2e2e2e" stroke-width="1"/><path d="M14.8 0.5 v4.5 h4.5z" fill="#eef6ee" stroke="#2e2e2e" stroke-width="0.8"/><path d="M7.5 5h4.5M7.5 8.6h9.5M7.5 11.6h9.5M7.5 14.6h9.5" stroke="#3f8a48" stroke-width="1.5"/></svg>
<div class="t" style="left:89.50px;top:679.77px;font-size:10.2px;color:#222;letter-spacing:-0.22px">Possède des actions filles</div>
<svg style="left:211px;top:673px" width="23" height="23" viewBox="0 0 23 23"><path d="M0.6 5 L6.5 3.8 L9.5 21.3 L3.2 22Z" fill="#7f9cc0" stroke="#333" stroke-width="0.9"/><path d="M14 3.2 L22.3 5.8 L19.6 22.3 L11 21.2Z" fill="#7f9cc0" stroke="#333" stroke-width="0.9"/><path d="M5.3 0.5 h9.5 l4.5 4.5 v13.6 h-14z" fill="#d9a070" stroke="#2e2e2e" stroke-width="1"/><path d="M14.8 0.5 v4.5 h4.5z" fill="#eef6ee" stroke="#2e2e2e" stroke-width="0.8"/><path d="M7.5 5h4.5M7.5 8.6h9.5M7.5 11.6h9.5M7.5 14.6h9.5" stroke="#8a5a30" stroke-width="1.5"/></svg>
<div class="t" style="left:240.00px;top:679.77px;font-size:10.2px;color:#222;letter-spacing:-0.22px">A une action mère</div>
<svg style="left:331px;top:673px" width="23" height="23" viewBox="0 0 23 23"><path d="M0.6 5 L6.5 3.8 L9.5 21.3 L3.2 22Z" fill="#b9b08a" stroke="#333" stroke-width="0.9"/><path d="M14 3.2 L22.3 5.8 L19.6 22.3 L11 21.2Z" fill="#b9b08a" stroke="#333" stroke-width="0.9"/><path d="M5.3 0.5 h9.5 l4.5 4.5 v13.6 h-14z" fill="#a47ad6" stroke="#2e2e2e" stroke-width="1"/><path d="M14.8 0.5 v4.5 h4.5z" fill="#eef6ee" stroke="#2e2e2e" stroke-width="0.8"/><path d="M7.5 5h4.5M7.5 8.6h9.5M7.5 11.6h9.5M7.5 14.6h9.5" stroke="#5a3a90" stroke-width="1.5"/></svg>
<div class="t" style="left:360.00px;top:679.77px;font-size:10.2px;color:#222;letter-spacing:-0.33px">Est mère et fille</div>
<div class="a" style="left:446.5px;top:675px;width:19px;height:19px;border-radius:50%;background:#6d6259;border:1.3px solid #463c35"></div>
<div class="t" style="left:469.50px;top:679.31px;font-size:10.5px;color:#222;letter-spacing:0px">Archivée</div>
<div class="a" style="left:518.5px;top:675px;width:19px;height:19px;border-radius:50%;background:#bdbdbd;border:1.3px solid #8a8a8a"></div>
<div class="t" style="left:542.60px;top:679.31px;font-size:10.5px;color:#222;letter-spacing:0px">Aplanifier</div>
<div class="a" style="left:600.5px;top:675px;width:19px;height:19px;border-radius:50%;background:#f39a9a;border:1.3px solid #d04848"></div>
<div class="t" style="left:624.70px;top:679.31px;font-size:10.5px;color:#222;letter-spacing:0px">En retard</div>
<div class="a" style="left:677.5px;top:675px;width:19px;height:19px;border-radius:50%;background:#a6dca8;border:1.3px solid #3f9e48"></div>
<div class="t" style="left:701.30px;top:679.31px;font-size:10.5px;color:#222;letter-spacing:-0.26px">Réalisée ou planifiée</div>
<div class="a" style="left:800px;top:675px;width:19px;height:19px;border-radius:50%;background:#f8dba6;border:1.3px solid #e2b262"></div>
<div class="t" style="left:824.40px;top:679.31px;font-size:10.5px;color:#222;letter-spacing:-0.25px">En cours</div>
<div class="a" style="left:869px;top:675px;width:19px;height:19px;border-radius:50%;background:#b8b6f8;border:1.3px solid #5a58d8"></div>
<div class="t" style="left:893.00px;top:679.31px;font-size:10.5px;color:#222;letter-spacing:0px">En attente du document de validation</div>
<div class="a" style="left:1102px;top:48px;width:23px;height:28px;background:#fff;border:2px solid #4a6ae4;border-radius:2.5px"></div>
<svg style="left:1115px;top:62px" width="16" height="16" viewBox="0 0 16 16"><path d="M8 0.5 L15.5 8 L8 15.5 L0.5 8Z" fill="#2f8a43"/><circle cx="8" cy="8" r="6.8" fill="#2f8a43"/><path d="M8 3.5v9M3.5 8h9" stroke="#fff" stroke-width="2.8"/></svg>
<div class="a" style="left:1102px;top:85px;width:23px;height:28px;background:#fff;border:2px solid #4a6ae4;border-radius:2.5px"></div>
<svg style="left:1109px;top:89px" width="24" height="24" viewBox="0 0 24 24"><path d="M17 2 L22 6.5 L7 20 L2 21.5 L3 16.5Z" fill="#d6b12a" stroke="#c09a18" stroke-width="0.6"/><path d="M5 18 L15.5 7" stroke="#f0d870" stroke-width="0.9" stroke-dasharray="1.2 1.2"/><path d="M2 21.5 L3 18 L5.5 20.3Z" fill="#fff"/><path d="M15.5 3.5 L20.5 8" stroke="#fff3b0" stroke-width="0.8"/></svg>
<div class="a" style="left:1102px;top:124px;width:23px;height:28px;background:#fff;border:2px solid #4a6ae4;border-radius:2.5px"></div>
<svg style="left:1114px;top:131px" width="18" height="22" viewBox="0 0 18 22"><path d="M7 1.2 h4 v2 h-4z" fill="#fff" stroke="#444" stroke-width="1.2"/><path d="M1.5 3.8 h15 v2.2 h-15z" fill="#fff" stroke="#444" stroke-width="1.3"/><path d="M2.8 6.2 h12.4 l-1.2 14.3 h-10z" fill="#fff" stroke="#444" stroke-width="1.4"/><path d="M6.3 8.5v10M9 8.5v10M11.7 8.5v10" stroke="#555" stroke-width="1.3"/></svg>
<svg style="left:1103px;top:164px" width="28" height="30" viewBox="0 0 28 30"><path d="M0.5 3 C3 3.6 6 4.2 8.2 2.8 C10 1.5 12 0.3 14 0.3 C16 0.3 18 1.5 19.8 2.8 C22 4.2 25 3.6 27.5 3 C28.2 8 28.2 13 27.2 18 C25.7 24 20 28 14 29.6 C8 28 2.3 24 0.8 18 C-0.2 13 -0.2 8 0.5 3Z" fill="#79b51b"/><path d="M7.2 14.8 L12.2 19.8 L21.2 10.2" fill="none" stroke="#f4f9ee" stroke-width="2.6"/></svg>
<svg style="left:1101px;top:228px" width="32" height="32" viewBox="0 0 32 32"><circle cx="15.5" cy="16" r="14.8" fill="#4a86a6"/><path d="M10.3 12.2 C10.3 8.6 12.6 6.7 15.7 6.7 C19 6.7 21.2 8.8 21.2 11.5 C21.2 14.3 19 15.3 17.6 16.6 C16.5 17.6 16.3 18.6 16.3 20.3" fill="none" stroke="#fff" stroke-width="3"/><circle cx="16.2" cy="24.3" r="1.9" fill="#fff"/><circle cx="25.6" cy="5.2" r="3.1" fill="#ef8a8a" stroke="#d8e4f6" stroke-width="0.6"/></svg>
<svg style="left:1102px;top:360px" width="30" height="29" viewBox="0 0 30 29"><rect x="7" y="1" width="22" height="27" rx="1" fill="#1f7a47"/><rect x="7" y="1" width="22" height="7" fill="#21a366"/><rect x="18" y="1" width="11" height="7" fill="#33c481"/><rect x="18" y="8" width="11" height="7" fill="#21a366"/><rect x="7" y="21" width="22" height="7" fill="#185c37"/><rect x="0.5" y="7" width="15" height="15" rx="1" fill="#107c41"/><path d="M4.2 10 L11.8 19 M11.8 10 L4.2 19" stroke="#fff" stroke-width="2.1"/></svg>
<svg style="left:1102px;top:672px" width="30" height="29" viewBox="0 0 30 29"><path d="M4 4 L26 25 M26 4 L4 25" stroke="#4f6f8c" stroke-width="7.5" stroke-linecap="butt"/></svg>
<svg style="left:1138px;top:702px" width="17" height="17" viewBox="0 0 17 17"><path d="M1.5 16.5 L16 2 M5.5 16.5 L16 6 M9.5 16.5 L16 10 M13.5 16.5 L16 14" stroke="#1e1e1e" stroke-width="1.4"/></svg>
<div class="a" style="left:1154px;top:28px;width:1px;height:693px;background:#2cbcdc"></div>
<div class="a" style="left:0px;top:719px;width:1155px;height:2px;background:#22b8d4"></div>
<svg style="left:0;top:715px" width="6" height="6" viewBox="0 0 6 6"><path d="M0 0 L6 6 H0Z" fill="#1c2a44"/></svg>
</body></html>
